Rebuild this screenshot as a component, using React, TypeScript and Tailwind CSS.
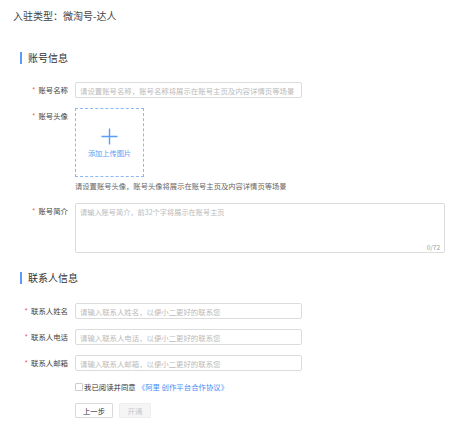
import React from "react";

const font = "font-['Noto_Sans_CJK_SC','Noto_Sans',sans-serif]";

function Label(props: { text: string }) {
  return (
    <div className="w-[68px] h-[16px] shrink-0 flex items-center justify-end text-[7.4px] text-[#444] leading-none">
      <span className="text-[#f05a5a] mr-[3px]">*</span>
      {props.text}
    </div>
  );
}

function TextInput(props: { placeholder: string }) {
  return (
    <input
      type="text"
      placeholder={props.placeholder}
      className="w-[227px] h-[16px] border border-[#dcdcdc] rounded-[2px] px-[4px] text-[7.4px] text-[#333] placeholder:text-[#bbb] outline-none"
    />
  );
}

function SectionTitle(props: { title: string }) {
  return (
    <div className="flex items-center pl-[20px] h-[12px]">
      <span className="w-[2px] h-[12px] bg-[#5a9cf8]" />
      <span className="ml-[6px] text-[10px] leading-none text-[#333]">{props.title}</span>
    </div>
  );
}

export default function App() {
  return (
    <div className={`w-[450px] h-[423px] bg-white overflow-hidden ${font}`}>
      <div className="pt-[10px] pl-[13px] text-[10px] leading-[12px] text-[#444]">入驻类型：微淘号-达人</div>

      <div className="mt-[30px]">
        <SectionTitle title="账号信息" />
      </div>

      <div className="mt-[18px] flex gap-[7px]">
        <Label text="账号名称" />
        <TextInput placeholder="请设置账号名称，账号名称将展示在账号主页及内容详情页等场景" />
      </div>

      <div className="mt-[10px] flex gap-[7px]">
        <Label text="账号头像" />
        <div>
          <div className="w-[69px] h-[69px] border border-dashed border-[#8ab8f8] flex flex-col items-center">
            <svg width="17" height="17" viewBox="0 0 17 17" className="mt-[19px]">
              <path d="M8.5 0.5v16M0.5 8.5h16" stroke="#5a9cf8" strokeWidth="1.4" />
            </svg>
            <span className="mt-[5px] text-[7.2px] leading-none text-[#5a9cf8]">添加上传图片</span>
          </div>
          <div className="mt-[3px] text-[7.3px] leading-[12px] text-[#666]">
            请设置账号头像，账号头像将展示在账号主页及内容详情页等场景
          </div>
        </div>
      </div>

      <div className="mt-[11px] flex gap-[7px]">
        <Label text="账号简介" />
        <div className="relative w-[370px] h-[50px]">
          <textarea
            placeholder="请输入账号简介，前32个字将展示在账号主页"
            className="w-full h-full resize-none border border-[#dcdcdc] rounded-[2px] px-[4px] py-[3px] text-[7.2px] leading-[10px] placeholder:text-[#bbb] outline-none"
          />
          <span className="absolute right-[5px] bottom-[3px] text-[6.5px] leading-none text-[#999]">0/72</span>
        </div>
      </div>

      <div className="mt-[19px]">
        <SectionTitle title="联系人信息" />
      </div>

      <div className="mt-[19px] flex flex-col gap-[10px]">
        <div className="flex gap-[7px]">
          <Label text="联系人姓名" />
          <TextInput placeholder="请输入联系人姓名，以便小二更好的联系您" />
        </div>
        <div className="flex gap-[7px]">
          <Label text="联系人电话" />
          <TextInput placeholder="请输入联系人电话，以便小二更好的联系您" />
        </div>
        <div className="flex gap-[7px]">
          <Label text="联系人邮箱" />
          <TextInput placeholder="请输入联系人邮箱，以便小二更好的联系您" />
        </div>
      </div>

      <div className="mt-[8px] pl-[75px] h-[16px] flex items-center text-[7.4px] leading-none">
        <span className="w-[8px] h-[8px] border border-[#ccc] rounded-[1px] bg-white" />
        <span className="ml-[1px] text-[#333]">我已阅读并同意</span>
        <span className="ml-[2px] text-[#4a8cf7]">《阿里 创作平台合作协议》</span>
      </div>

      <div className="mt-[8px] pl-[75px] flex gap-[6px]">
        <button className="w-[38px] h-[15px] border border-[#d9d9d9] rounded-[1px] bg-white text-[7.4px] leading-none text-[#333]">
          上一步
        </button>
        <button className="w-[32px] h-[15px] border border-[#eee] rounded-[1px] bg-[#f5f5f5] text-[7.4px] leading-none text-[#c8c8c8]">
          开通
        </button>
      </div>
    </div>
  );
}
